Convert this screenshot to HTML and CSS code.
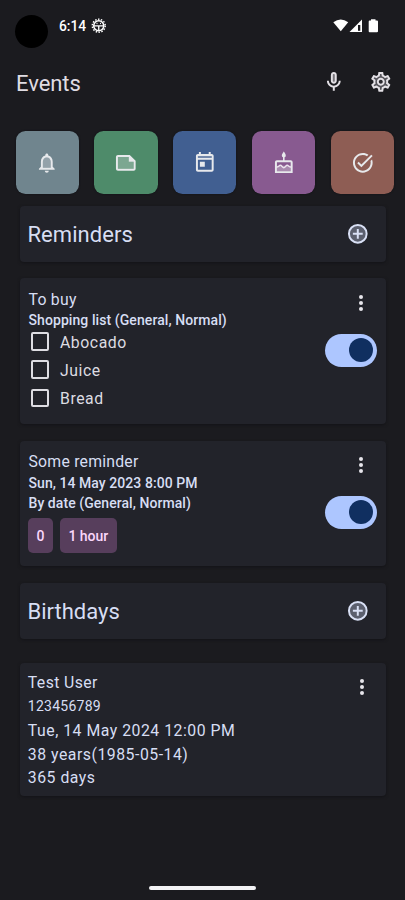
FILE: index.html
```html
<!DOCTYPE html>
<html lang="en">
<head>
<meta charset="utf-8">
<title>Events</title>
<link rel="stylesheet" href="styles.css">
</head>
<body>
<div class="screen">
  <div class="status">
    <span class="camera"></span>
    <span class="time">6:14</span>
    <svg class="debug" viewBox="0 0 16 16" fill="none" stroke="#fff"><circle cx="8" cy="8" r="5.200" stroke-width="1.600"/><circle cx="8" cy="8" r="6.700" stroke-width="1.500" stroke-dasharray="1.500 1.500"/><path d="M3 8.200h10M8 8v5" stroke-width="1.400"/><path d="M6.200 5v1.300M9.800 5v1.300" stroke-width="1"/></svg>
    <svg class="signals" viewBox="0 0 46 14" fill="#fff"><path d="M.3 3.200Q7.700-2 15.200 3.200L7.800 12.300z"/><path d="M16.500 13 29 .5V13z"/><path d="M25 6h2.300v5.800H25z" fill="#1b1b1f"/><path d="M38 .3h4.500v1.300H44q1 0 1 1v9.600q0 1-1 1h-7.300q-1 0-1-1V2.600q0-1 1-1H38z"/></svg>
  </div>
  <header class="appbar">
    <h1>Events</h1>
    <svg class="icon" viewBox="0 0 24 24" fill="#e4e1e6"><path d="M12 14c1.660 0 3-1.340 3-3V5c0-1.660-1.340-3-3-3S9 3.340 9 5v6c0 1.660 1.340 3 3 3z"/><path d="M11 5c0-.55.45-1 1-1s1 .45 1 1v6c0 .55-.45 1-1 1s-1-.45-1-1z" fill="#77757a"/><path d="M17 11c0 2.760-2.240 5-5 5s-5-2.240-5-5H5c0 3.530 2.610 6.430 6 6.920V21h2v-3.080c3.390-.49 6-3.390 6-6.920z"/></svg>
    <svg class="icon" viewBox="0 0 24 24"><path fill="#55545a" d="M10.500 4h3l.7 2.500 2 1 2.300-.8 1.300 2.400-1.700 1.800v2.200l1.700 1.800-1.300 2.400-2.300-.8-2 1-.7 2.500h-3l-.7-2.500-2-1-2.300.8-1.300-2.400 1.700-1.800v-2.200L4.200 9.100l1.300-2.400 2.300.8 2-1z"/><circle cx="12" cy="12" r="3" fill="#29282d"/><path fill="#e4e1e6" d="M19.430 12.980c.04-.32.07-.64.07-.98 0-.34-.03-.66-.07-.98l2.110-1.650c.19-.15.24-.42.12-.64l-2-3.460c-.09-.16-.26-.25-.44-.25-.06 0-.12.010-.17.030l-2.490 1c-.52-.4-1.080-.73-1.690-.98l-.38-2.650C14.460 2.180 14.250 2 14 2h-4c-.25 0-.46.18-.49.42l-.38 2.650c-.61.25-1.170.59-1.690.98l-2.490-1c-.06-.02-.12-.03-.18-.03-.17 0-.34.09-.43.25l-2 3.460c-.13.22-.07.49.12.64l2.110 1.650c-.04.32-.07.65-.07.98 0 .33.030.66.070.98l-2.110 1.650c-.19.15-.24.42-.12.64l2 3.460c.09.16.26.25.44.25.06 0 .12-.01.17-.03l2.490-1c.52.4 1.080.73 1.690.98l.38 2.650c.03.24.24.42.49.42h4c.25 0 .46-.18.49-.42l.38-2.650c.61-.25 1.170-.59 1.690-.98l2.490 1c.06.020.12.030.18.030.17 0 .34-.09.43-.25l2-3.460c.12-.22.070-.49-.12-.64zm-1.980-1.710c.04.31.050.52.050.73 0 .21-.02.43-.05.73l-.14 1.130.89.7 1.080.84-.7 1.210-1.270-.51-1.040-.42-.9.68c-.43.32-.84.56-1.250.73l-1.060.43-.16 1.130-.2 1.350h-1.400l-.19-1.350-.16-1.130-1.060-.43c-.43-.18-.83-.41-1.230-.71l-.91-.7-1.060.43-1.270.51-.7-1.210 1.080-.84.89-.7-.14-1.130c-.03-.31-.05-.54-.05-.74s.020-.43.050-.73l.14-1.130-.89-.7-1.080-.84.7-1.210 1.270.51 1.040.42.9-.68c.43-.32.84-.56 1.250-.73l1.060-.43.16-1.130.2-1.350h1.390l.19 1.350.16 1.130 1.060.43c.43.18.83.41 1.230.71l.91.7 1.060-.43 1.270-.51.7 1.210-1.070.85-.89.7zM12 8c-2.210 0-4 1.790-4 4s1.790 4 4 4 4-1.790 4-4-1.790-4-4-4zm0 6c-1.100 0-2-.9-2-2s.9-2 2-2 2 .9 2 2-.9 2-2 2z"/></svg>
  </header>
  <nav class="tiles">
    <div class="tile tile-reminder"><svg class="icon" viewBox="0 0 24 24"><path opacity=".3" d="M12 6.500c-2.490 0-4 2.020-4 4.500v6h8v-6c0-2.480-1.510-4.500-4-4.500z"/><path d="M12 22c1.100 0 2-.9 2-2h-4c0 1.100.9 2 2 2zm6-6v-5c0-3.070-1.630-5.640-4.500-6.320V4c0-.83-.67-1.500-1.500-1.500s-1.500.67-1.500 1.500v.68C7.640 5.360 6 7.920 6 11v5l-2 2v1h16v-1zm-2 1H8v-6c0-2.480 1.510-4.500 4-4.500s4 2.020 4 4.500z"/></svg></div>
    <div class="tile tile-note"><svg class="icon" viewBox="0 0 24 24"><path opacity=".3" d="M4 6h11v5h5v7H4z"/><path d="M16 4H4c-1.100 0-2 .9-2 2v12c0 1.100.9 2 2 2h16c1.100 0 2-.9 2-2v-8zM4 18V6h11v5h5v7z"/></svg></div>
    <div class="tile tile-calendar"><svg class="icon" viewBox="0 0 24 24"><path opacity=".3" d="M5 5h14v3H5z"/><path d="M19 3h-1V1h-2v2H8V1H6v2H5c-1.110 0-1.990.9-1.990 2L3 19c0 1.100.89 2 2 2h14c1.100 0 2-.9 2-2V5c0-1.100-.9-2-2-2zm0 16H5V9h14zm0-12H5V5h14zM7 11h5v5H7z"/></svg></div>
    <div class="tile tile-birthday"><svg class="icon" viewBox="0 0 24 24"><path opacity=".35" d="M5 15h14v6H5z"/><path d="M12 .5s2 2.500 2 4-.9 2-2 2-2-.7-2-2 2-4 2-4zM11.200 6h1.600v4h-1.600zM5 9.500h14c1.100 0 2 .9 2 2V22.500H3V11.500c0-1.100.9-2 2-2zm0 2v9.200h14v-9.200z"/><path fill="none" stroke="#ece4ee" stroke-width="1.400" d="M4 16c2 1.500 3-1.500 4.500-1.500S10.500 17 12 17s2-2.500 3.500-2.500S18 17.500 20 16"/></svg></div>
    <div class="tile tile-task"><svg class="icon" viewBox="0 0 24 24"><path d="M22 5.180 10.590 16.600l-4.240-4.240 1.410-1.410 2.830 2.830 10-10zm-2.210 5.040c.13.570.21 1.170.21 1.780 0 4.420-3.580 8-8 8s-8-3.580-8-8 3.580-8 8-8c1.580 0 3.040.46 4.280 1.250l1.440-1.440C16.100 2.670 14.130 2 12 2 6.480 2 2 6.480 2 12s4.480 10 10 10 10-4.480 10-10c0-1.190-.22-2.330-.6-3.390z"/></svg></div>
  </nav>
  <main>
    <section class="card heading">
      <h2>Reminders</h2>
      <svg class="icon" viewBox="0 0 24 24"><circle cx="12" cy="12" r="9" fill="#5b5f6e" stroke="#d9e0f5" stroke-width="2"/><path d="M12 7v10M7 12h10" stroke="#d9e0f5" stroke-width="2"/></svg>
    </section>
    <section class="card shopping">
      <div class="body">
        <div class="title">To buy</div>
        <div class="meta">Shopping list (General, Normal)</div>
        <ul class="todo">
          <li><span class="box"></span><span>Abocado</span></li>
          <li><span class="box"></span><span>Juice</span></li>
          <li><span class="box"></span><span>Bread</span></li>
        </ul>
      </div>
      <div class="side"><span class="more"><i></i><i></i><i></i></span><span class="toggle"><i></i></span></div>
    </section>
    <section class="card reminder">
      <div class="body">
        <div class="title some">Some reminder</div>
        <div class="meta date">Sun, 14 May 2023 8:00 PM</div>
        <div class="meta kind">By date (General, Normal)</div>
        <div class="chips"><span class="chip zero">0</span><span class="chip hour">1 hour</span></div>
      </div>
      <div class="side"><span class="more"><i></i><i></i><i></i></span><span class="toggle"><i></i></span></div>
    </section>
    <section class="card heading">
      <h2 class="tight">Birthdays</h2>
      <svg class="icon" viewBox="0 0 24 24"><circle cx="12" cy="12" r="9" fill="#5b5f6e" stroke="#d9e0f5" stroke-width="2"/><path d="M12 7v10M7 12h10" stroke="#d9e0f5" stroke-width="2"/></svg>
    </section>
    <section class="card birthday">
      <div class="body">
        <div class="title">Test User</div>
        <div class="phone">123456789</div>
        <div class="line when">Tue, 14 May 2024 12:00 PM</div>
        <div class="line age">38 years(1985-05-14)</div>
        <div class="line">365 days</div>
      </div>
      <div class="side"><span class="more"><i></i><i></i><i></i></span></div>
    </section>
  </main>
  <div class="homebar"></div>
</div>
</body>
</html>
```
FILE: styles.css
```css
* { box-sizing: border-box; }
body { margin: 0; background: #1b1b1f; font-family: Roboto, sans-serif; }
h1, h2, ul { margin: 0; padding: 0; font-weight: 400; }
.screen { width: 405px; height: 900px; overflow: hidden; display: flex; flex-direction: column; background: #1b1b1f; }
.icon { width: 23.600px; height: 23.600px; display: block; flex: none; }

.status { height: 60px; padding: 14.500px 26px 0 15px; display: flex; align-items: flex-start; color: #fff; }
.camera { width: 33px; height: 33px; border-radius: 50%; background: #000; }
.time { margin-left: 11px; margin-top: 1.500px; width: 31.500px; font-size: 13.800px; line-height: 20px; font-weight: 500; letter-spacing: 0; }
.debug { width: 15.500px; height: 15.500px; margin-top: 3.500px; }
.signals { width: 46px; height: 14px; margin: 4.500px 0 0 auto; }

.appbar { height: 70.500px; padding: 10px 12px 0 16px; display: flex; align-items: flex-start; gap: 24px; }
.appbar h1 { flex: 1; padding-top: 1px; font-size: 22px; line-height: 26px; color: #e0dde3; letter-spacing: -.05px; }

.tiles { height: 75.500px; padding-left: 15.500px; display: flex; gap: 15.400px; }
.tile { width: 63.400px; height: 63.400px; flex: none; border-radius: 9.500px; display: flex; align-items: center; justify-content: center; fill: #e7e9ec; box-shadow: 0 0 2px #101014; }
.tile .icon { margin-top: .4px; }
.tile-reminder { background: #70858e; }
.tile-note { background: #4e8b6a; }
.tile-calendar { background: #415f91; }
.tile-birthday { background: #885a90; }
.tile-task { background: #8e5d54; }

main { padding: 0 19.500px; display: flex; flex-direction: column; color: #d7def3; }
.card { border-radius: 4px; background: #22232a; box-shadow: 0 1px 3px #131317; display: flex; }
.heading { height: 55.500px; padding: 0 15.700px 0 8px; align-items: center; justify-content: space-between; }
.heading h2 { font-size: 22px; line-height: 28px; padding-top: 3px; letter-spacing: .05px; }
.heading .tight { padding-top: 2px; letter-spacing: 0; }
.body { flex: 1; }
.title, .line { font-size: 15.800px; line-height: 23px; letter-spacing: .42px; }
.meta { font-size: 14px; line-height: 20.700px; font-weight: 500; letter-spacing: .08px; }

.shopping { height: 146px; margin-top: 16.500px; padding: 9.500px 8.500px 0 9px; }
.shopping .title { letter-spacing: .25px; }
.shopping .meta { line-height: 18px; padding-top: .5px; }
.todo { list-style: none; margin-top: -1.500px; color: #dddce2; }
.todo li { height: 28.300px; padding-left: 2px; display: flex; gap: 11px; font-size: 15.800px; line-height: 29.500px; letter-spacing: .55px; }
.box { width: 18.500px; height: 18.500px; margin-top: 4.500px; border: 2px solid #dedde3; border-radius: 2px; }

.side { display: flex; flex-direction: column; align-items: center; }
.more { display: flex; flex-direction: column; gap: 2px; margin: 7.500px 0 0 20px; }
.more i { width: 4px; height: 4px; border-radius: 50%; background: #e7e5eb; }
.toggle { width: 52px; height: 32.500px; border-radius: 17px; margin-top: 23px; padding: 4.300px; background: #adc6ff; display: flex; justify-content: flex-end; }
.toggle i { width: 24px; height: 24px; border-radius: 50%; background: #102f60; }

.reminder { height: 125.500px; margin-top: 16.500px; padding: 9.300px 8.500px 0 9px; }
.reminder .more { margin-top: 7.300px; }
.reminder .meta { letter-spacing: .06px; }
.some { letter-spacing: .22px; }
.kind { margin-top: -.4px; }
.chips { display: flex; gap: 7.500px; margin-top: 4px; margin-left: -.4px; }
.chip { height: 35px; border-radius: 5px; background: #573e5c; color: #fbd7fc; font-size: 14px; line-height: 36px; font-weight: 500; text-align: center; letter-spacing: 0; }
.zero { width: 24.500px; }
.hour { width: 56.500px; }
.reminder + .heading { margin-top: 17px; }

.birthday { height: 133px; margin-top: 24.400px; padding: 8px 21.500px 0 8.300px; }
.birthday .title { letter-spacing: .4px; }
.birthday .more { margin: 8px 0 0; }
.phone { font-size: 14px; line-height: 24px; letter-spacing: .26px; margin-bottom: 1.100px; }
.line { line-height: 23.600px; letter-spacing: .52px; }
.homebar { width: 107px; height: 4px; border-radius: 2px; background: #f3f3f5; margin: auto auto 10px 149px; }
```
